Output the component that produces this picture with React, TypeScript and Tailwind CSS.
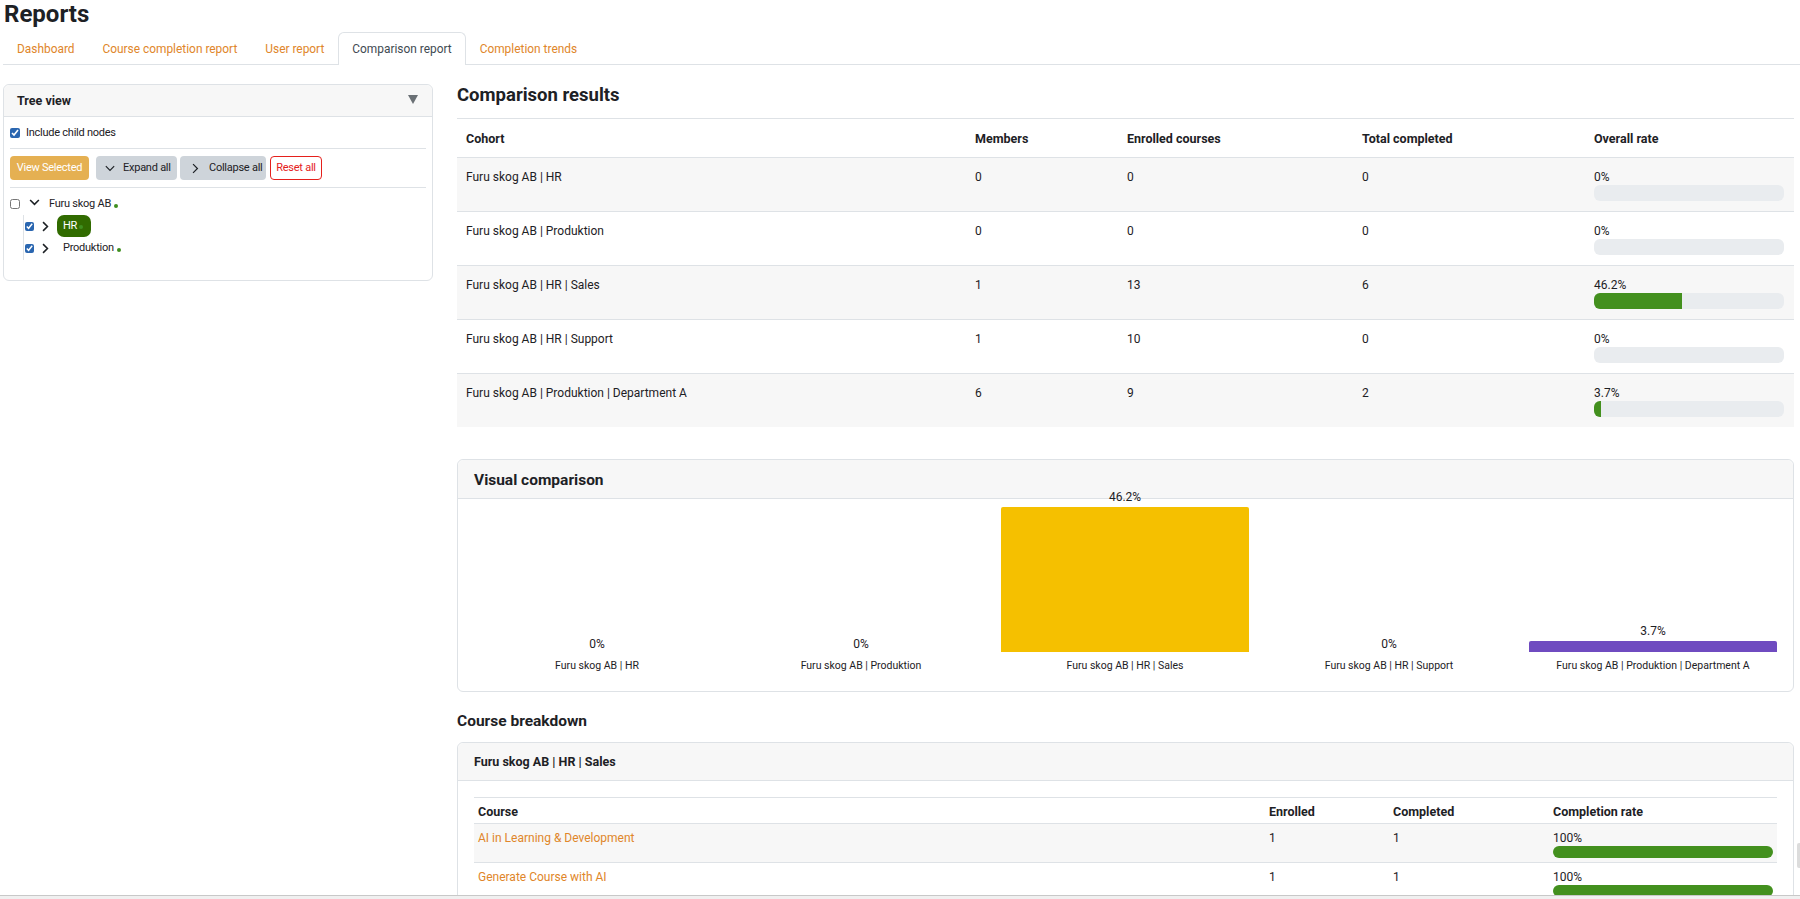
import React from "react";

const cols = ["w-[509px]", "w-[152px]", "w-[235px]", "w-[232px]", "w-[209px]"];

const rows = [
  { name: "Furu skog AB | HR", m: "0", e: "0", c: "0", r: "0%", p: 0 },
  { name: "Furu skog AB | Produktion", m: "0", e: "0", c: "0", r: "0%", p: 0 },
  { name: "Furu skog AB | HR | Sales", m: "1", e: "13", c: "6", r: "46.2%", p: 46.2 },
  { name: "Furu skog AB | HR | Support", m: "1", e: "10", c: "0", r: "0%", p: 0 },
  { name: "Furu skog AB | Produktion | Department A", m: "6", e: "9", c: "2", r: "3.7%", p: 3.7 },
];

const chart = [
  { v: "0%", h: 0, cat: "Furu skog AB | HR", color: "" },
  { v: "0%", h: 0, cat: "Furu skog AB | Produktion", color: "" },
  { v: "46.2%", h: 145, cat: "Furu skog AB | HR | Sales", color: "#f5c000" },
  { v: "0%", h: 0, cat: "Furu skog AB | HR | Support", color: "" },
  { v: "3.7%", h: 11, cat: "Furu skog AB | Produktion | Department A", color: "#6f4bc0" },
];

function Down({ className, sw = 1.4 }: { className: string; sw?: number }) {
  return (
    <svg viewBox="0 0 12 8" className={className} fill="none" stroke="#1d2125" strokeWidth={sw}>
      <path d="M1 1.2 L6 6.2 L11 1.2" />
    </svg>
  );
}
function Right({ className, sw = 1.4 }: { className: string; sw?: number }) {
  return (
    <svg viewBox="0 0 8 12" className={className} fill="none" stroke="#1d2125" strokeWidth={sw}>
      <path d="M1.2 1 L6.2 6 L1.2 11" />
    </svg>
  );
}
function Dot({ className = "" }: { className?: string }) {
  return <span className={"inline-block w-[4px] h-[4px] rounded-full bg-[#3f8f1f] " + className} />;
}
function Box({ checked = false, small = false }: { checked?: boolean; small?: boolean }) {
  return (
    <input
      type="checkbox"
      defaultChecked={checked}
      className={(small ? "w-[9px] h-[9px]" : "w-[10px] h-[10px]") + " m-0 shrink-0 accent-[#2a66b0]"}
    />
  );
}

export default function App() {
  return (
    <div className="relative h-screen overflow-hidden bg-white text-[#1d2125] text-[12px] font-['Roboto',sans-serif]">
      <h1 className="pl-[4px] h-[32px] text-[24px] leading-[28px] font-bold">Reports</h1>

      <nav className="ml-[3px] flex h-[33px] border-b border-[#dee2e6] text-[11.9px] text-[#e0862a]">
        <a className="px-[14px] leading-[34px]">Dashboard</a>
        <a className="px-[14px] leading-[34px]">Course completion report</a>
        <a className="px-[14px] leading-[34px]">User report</a>
        <a className="-mb-px h-[33px] px-[13px] leading-[33px] rounded-t-[6px] border border-b-0 border-[#dee2e6] bg-white text-[#3f4a52]">
          Comparison report
        </a>
        <a className="px-[14px] leading-[34px]">Completion trends</a>
      </nav>

      <div className="mt-[19px] ml-[3px] mr-[6px] flex items-start gap-[24px]">
        <aside className="w-[430px] shrink-0 rounded-[6px] border border-[#dee2e6]">
          <div className="relative flex h-[32px] items-center rounded-t-[6px] border-b border-[#dee2e6] bg-[#f7f7f7] pl-[13px] pt-[2px] text-[12.5px] font-bold">
            Tree view
            <span className="absolute right-[14px] top-[10px] h-0 w-0 border-x-[5px] border-t-[9px] border-x-transparent border-t-[#6a7075]" />
          </div>
          <div className="px-[6px] pb-[18px] text-[11px] tracking-[-0.25px]">
            <label className="flex h-[32px] items-center gap-[6px] border-b border-[#dee2e6] pt-[1px]">
              <Box checked />
              Include child nodes
            </label>
            <div className="flex border-b border-[#dee2e6] pb-[7px] pt-[7px]">
              <button className="h-[24px] w-[79px] rounded-[4px] bg-[#e5b052] text-white whitespace-nowrap">View Selected</button>
              <button className="ml-[7px] flex h-[24px] w-[81px] items-center rounded-[4px] bg-[#ced4da] pl-[9px] whitespace-nowrap">
                <Down className="mr-[8px] w-[10px] h-[7px]" />
                Expand all
              </button>
              <button className="ml-[3px] flex h-[24px] w-[86px] items-center rounded-[4px] bg-[#ced4da] pl-[12px] whitespace-nowrap">
                <Right className="mr-[10px] w-[7px] h-[11px]" />
                Collapse all
              </button>
              <button className="ml-[4px] h-[24px] w-[52px] rounded-[4px] border border-[#e5201c] bg-white text-[#e5201c] whitespace-nowrap">
                Reset all
              </button>
            </div>
            <div className="mt-[5px] flex h-[22px] items-center">
              <Box />
              <Down className="ml-[9px] w-[11px] h-[7px] -mt-[4px]" sw={1.8} />
              <span className="ml-[9px]">Furu skog AB</span>
              <Dot className="ml-[3px] mt-[3px]" />
            </div>
            <div className="ml-[13px] mb-[2px] border-l border-[#dee2e6] pl-px pb-px">
              <div className="flex h-[22px] items-center">
                <Box checked small />
                <Right className="ml-[8px] w-[7px] h-[11px]" sw={1.8} />
                <span className="ml-[8px] flex h-[22px] w-[34px] items-center rounded-[7px] bg-[#316b00] pl-[6px] text-white">
                  HR
                  <Dot className="ml-[2px] mt-[2px]" />
                </span>
              </div>
              <div className="flex h-[22px] items-center">
                <Box checked small />
                <Right className="ml-[8px] w-[7px] h-[11px]" sw={1.8} />
                <span className="ml-[14px]">Produktion</span>
                <Dot className="ml-[3px] mt-[3px]" />
              </div>
            </div>
          </div>
        </aside>

        <main className="min-w-0 flex-1">
          <h2 className="h-[34px] text-[18.5px] font-bold leading-[22px]">Comparison results</h2>
          <table className="w-[1337px] table-fixed border-collapse border-t border-[#dee2e6]">
            <thead>
              <tr className="h-[39px] border-b border-[#dee2e6] text-left text-[12.5px]">
                {["Cohort", "Members", "Enrolled courses", "Total completed", "Overall rate"].map((h, i) => (
                  <th key={h} className={cols[i] + " px-[9px] pt-[2px] font-bold"}>
                    {h}
                  </th>
                ))}
              </tr>
            </thead>
            <tbody>
              {rows.map((r, i) => (
                <tr key={r.name} className={(i % 2 === 0 ? "bg-[#f7f7f7] " : "") + (i < 4 ? "border-b border-[#dee2e6]" : "")}>
                  <td className="px-[9px] pt-[10px] align-top leading-[18px]">{r.name}</td>
                  <td className="px-[9px] pt-[10px] align-top leading-[18px]">{r.m}</td>
                  <td className="px-[9px] pt-[10px] align-top leading-[18px]">{r.e}</td>
                  <td className="px-[9px] pt-[10px] align-top leading-[18px]">{r.c}</td>
                  <td className="pl-[9px] pr-[10px] pt-[10px] pb-[10px] align-top leading-[18px]">
                    <div>{r.r}</div>
                    <div className="-mt-[1px] h-[16px] overflow-hidden rounded-[6px] bg-[#e9ecef]">
                      <div className="h-full bg-[#43901e]" style={{ width: r.p + "%" }} />
                    </div>
                  </td>
                </tr>
              ))}
            </tbody>
          </table>

          <section className="mt-[32px] h-[233px] rounded-[6px] border border-[#dee2e6]">
            <div className="flex h-[39px] items-center rounded-t-[6px] border-b border-[#dee2e6] bg-[#f7f7f7] pl-[16px] pt-[3px] text-[15.5px] font-bold">
              Visual comparison
            </div>
            <div className="relative -mt-[11px] flex gap-[16px] px-[15px]">
              {chart.map((c) => (
                <div key={c.cat} className="flex h-[186px] w-[248px] flex-col items-center justify-end text-center">
                  <div className={"leading-[16px] " + (c.h ? "mb-[2px]" : "mb-0")}>{c.v}</div>
                  {c.h > 0 && (
                    <div className="w-full rounded-t-[2px]" style={{ height: c.h, background: c.color }} />
                  )}
                  <div className="mt-[6px] h-[16px] text-[10.5px] leading-[16px]">{c.cat}</div>
                </div>
              ))}
            </div>
          </section>

          <h3 className="mt-[18px] h-[32px] text-[15.5px] font-bold leading-[22px]">Course breakdown</h3>
          <section className="rounded-[6px] border border-[#dee2e6]">
            <div className="flex h-[38px] items-center rounded-t-[6px] border-b border-[#dee2e6] bg-[#f7f7f7] pl-[16px] pt-[2px] text-[12.5px] font-bold">
              Furu skog AB | HR | Sales
            </div>
            <div className="px-[16px] pt-[16px]">
              <table className="w-full table-fixed border-collapse border-t border-[#dee2e6]">
                <thead>
                  <tr className="h-[26px] border-b border-[#dee2e6] text-left text-[12.5px]">
                    <th className="w-[791px] px-[4px] pt-[3px] font-bold">Course</th>
                    <th className="w-[124px] px-[4px] pt-[3px] font-bold">Enrolled</th>
                    <th className="w-[160px] px-[4px] pt-[3px] font-bold">Completed</th>
                    <th className="px-[4px] pt-[3px] font-bold">Completion rate</th>
                  </tr>
                </thead>
                <tbody>
                  {["AI in Learning & Development", "Generate Course with AI"].map((n, i) => (
                    <tr key={n} className={(i === 0 ? "bg-[#f7f7f7] " : "") + "border-b border-[#dee2e6]"}>
                      <td className="px-[4px] pt-[6px] align-top leading-[16px] text-[#e0862a]">{n}</td>
                      <td className="px-[4px] pt-[6px] align-top leading-[16px]">1</td>
                      <td className="px-[4px] pt-[6px] align-top leading-[16px]">1</td>
                      <td className="px-[4px] pt-[6px] pb-[4px] align-top leading-[16px]">
                        <div>100%</div>
                        <div className="h-[12px] rounded-full bg-[#43901e]" />
                      </td>
                    </tr>
                  ))}
                </tbody>
              </table>
            </div>
          </section>
        </main>
      </div>

      <div className="absolute bottom-0 left-0 right-0 h-[4px] border-t border-[#c8c8c8] bg-[#f0f0f0]" />
      <div className="absolute right-0 top-[843px] h-[25px] w-[3px] rounded-l-[2px] bg-[#dcdcdc]" />
    </div>
  );
}
